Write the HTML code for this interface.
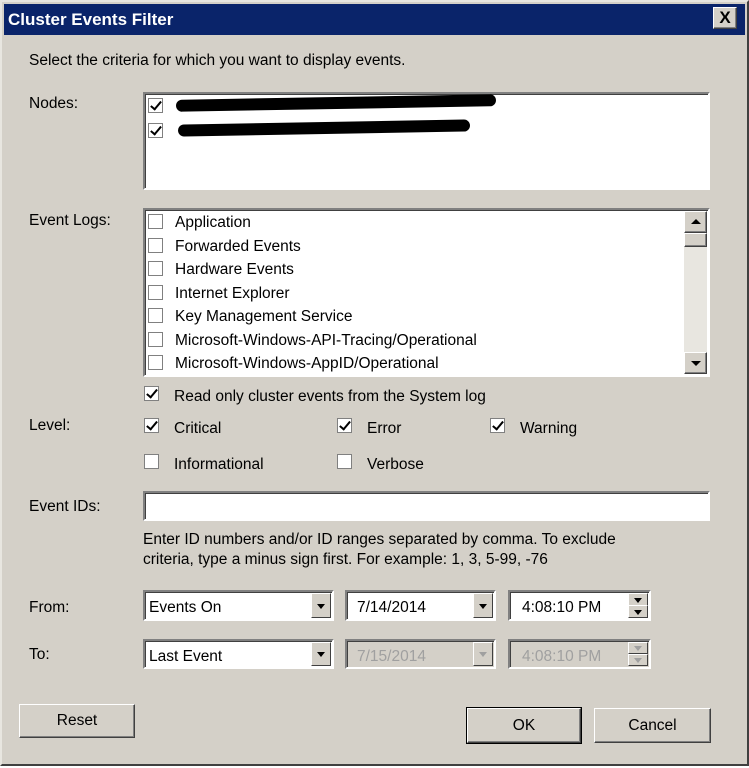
<!DOCTYPE html>
<html><head><meta charset="utf-8"><style>
body{margin:0;width:749px;height:768px;background:#fff;overflow:hidden;font-family:"Liberation Sans",sans-serif;font-size:15.5px;color:#000}
.win{position:absolute;left:0;top:0;width:745px;height:762px;background:#d4d0c8;border:2px solid;border-color:#e8e6e0 #404040 #404040 #e8e6e0}
.a{position:absolute;white-space:nowrap}
.t{margin-top:2px}
.title{position:absolute;left:2px;top:2px;width:741px;height:31px;background:#0a246a;color:#fff;font-weight:bold;font-size:17px;line-height:31px;padding-left:4px;box-sizing:border-box}
.sunk{position:absolute;background:#fff;border:2px solid;border-color:#808080 #fff #fff #808080;box-shadow:inset 1px 1px 0 #404040;box-sizing:border-box}
.cb{position:absolute;width:15px;height:15px;background:#fff;border:1px solid #808080;box-sizing:border-box}
.cb.k::after{content:"";position:absolute;left:4px;top:0px;width:4px;height:9px;border:solid #000;border-width:0 2px 2px 0;transform:rotate(40deg)}
.btn{position:absolute;background:#d4d0c8;border:1px solid;border-color:#fff #404040 #404040 #fff;box-shadow:inset -1px -1px 0 #808080;box-sizing:border-box;text-align:center}
.dd{position:absolute;width:20px;background:#d4d0c8;border:1px solid;border-color:#fff #404040 #404040 #fff;box-sizing:border-box}
.dd::after{content:"";position:absolute;left:5px;top:50%;margin-top:-2px;border:4px solid transparent;border-top:5px solid #000;border-bottom:0}
.dd.g::after{border-top-color:#a0a0a0}
.g{color:#a0a0a0}
</style></head><body>
<div class="win">
<div class="title">Cluster Events Filter</div>
<div class="btn" style="left:711px;top:5px;width:24px;height:22px;line-height:20px;font-size:17px;font-weight:bold">X</div>
</div>
<div class="a t" style="left:29px;top:50px">Select the criteria for which you want to display events.</div>
<div class="a t" style="left:29px;top:93px">Nodes:</div>
<div class="sunk" style="left:143px;top:92px;width:567px;height:98px"></div>
<div class="cb k" style="left:148px;top:98px"></div>
<div class="cb k" style="left:148px;top:123px"></div>
<div class="a" style="left:176px;top:97px;width:320px;height:12px;background:#000;border-radius:6px;transform:rotate(-1deg)"></div>
<div class="a" style="left:178px;top:122px;width:292px;height:12px;background:#000;border-radius:6px;transform:rotate(-1deg)"></div>
<div class="a t" style="left:29px;top:210px">Event Logs:</div>
<div class="sunk" style="left:143px;top:208px;width:567px;height:169px"></div>
<div class="a" style="left:684px;top:211px;width:23px;height:163px;background:#e8e6e0"></div>
<div class="btn" style="left:684px;top:211px;width:23px;height:22px"><div style="margin:7px auto 0;width:0;border:5px solid transparent;border-bottom:5px solid #000;border-top:0"></div></div>
<div class="btn" style="left:684px;top:233px;width:23px;height:14px"></div>
<div class="btn" style="left:684px;top:352px;width:23px;height:22px"><div style="margin:8px auto 0;width:0;border:5px solid transparent;border-top:5px solid #000;border-bottom:0"></div></div>
<div class="cb" style="left:148px;top:214px"></div><div class="a t" style="left:175px;top:212px">Application</div>
<div class="cb" style="left:148px;top:238px"></div><div class="a t" style="left:175px;top:236px">Forwarded Events</div>
<div class="cb" style="left:148px;top:261px"></div><div class="a t" style="left:175px;top:259px">Hardware Events</div>
<div class="cb" style="left:148px;top:285px"></div><div class="a t" style="left:175px;top:283px">Internet Explorer</div>
<div class="cb" style="left:148px;top:308px"></div><div class="a t" style="left:175px;top:306px">Key Management Service</div>
<div class="cb" style="left:148px;top:332px"></div><div class="a t" style="left:175px;top:330px">Microsoft-Windows-API-Tracing/Operational</div>
<div class="cb" style="left:148px;top:355px"></div><div class="a t" style="left:175px;top:353px">Microsoft-Windows-AppID/Operational</div>
<div class="cb k" style="left:144px;top:386px"></div><div class="a t" style="left:174px;top:386px">Read only cluster events from the System log</div>
<div class="a t" style="left:29px;top:415px">Level:</div>
<div class="cb k" style="left:144px;top:418px"></div><div class="a t" style="left:174px;top:418px">Critical</div>
<div class="cb k" style="left:337px;top:418px"></div><div class="a t" style="left:367px;top:418px">Error</div>
<div class="cb k" style="left:490px;top:418px"></div><div class="a t" style="left:520px;top:418px">Warning</div>
<div class="cb" style="left:144px;top:454px"></div><div class="a t" style="left:174px;top:454px">Informational</div>
<div class="cb" style="left:337px;top:454px"></div><div class="a t" style="left:367px;top:454px">Verbose</div>
<div class="a t" style="left:29px;top:496px">Event IDs:</div>
<div class="sunk" style="left:143px;top:491px;width:567px;height:30px"></div>
<div class="a t" style="left:143px;top:528px;line-height:20px">Enter ID numbers and/or ID ranges separated by comma. To exclude<br>criteria, type a minus sign first. For example: 1, 3, 5-99, -76</div>
<div class="a t" style="left:29px;top:597px">From:</div>
<div class="sunk" style="left:143px;top:590px;width:191px;height:31px"><div class="a t" style="left:4px;top:5px">Events On</div><div class="dd" style="right:1px;top:1px;height:25px"></div></div>
<div class="sunk" style="left:345px;top:590px;width:151px;height:31px"><div class="a t" style="left:10px;top:5px">7/14/2014</div><div class="dd" style="right:1px;top:1px;height:25px"></div></div>
<div class="sunk" style="left:508px;top:590px;width:143px;height:31px"><div class="a t" style="left:12px;top:5px">4:08:10 PM</div><div class="dd" style="right:1px;top:1px;height:13px"></div><div class="dd" style="right:1px;top:13px;height:13px"></div></div>
<div class="a t" style="left:29px;top:644px">To:</div>
<div class="sunk" style="left:143px;top:639px;width:191px;height:30px"><div class="a t" style="left:4px;top:5px">Last Event</div><div class="dd" style="right:1px;top:1px;height:24px"></div></div>
<div class="sunk" style="left:345px;top:639px;width:151px;height:30px;background:#d4d0c8"><div class="a t g" style="left:10px;top:5px">7/15/2014</div><div class="dd g" style="right:1px;top:1px;height:24px"></div></div>
<div class="sunk" style="left:508px;top:639px;width:143px;height:30px;background:#d4d0c8"><div class="a t g" style="left:12px;top:5px">4:08:10 PM</div><div class="dd g" style="right:1px;top:1px;height:12px"></div><div class="dd g" style="right:1px;top:13px;height:12px"></div></div>
<div class="btn" style="left:19px;top:704px;width:116px;height:34px;line-height:32px">Reset</div>
<div class="btn" style="left:467px;top:708px;width:114px;height:35px;line-height:33px;outline:1px solid #000">OK</div>
<div class="btn" style="left:594px;top:708px;width:117px;height:35px;line-height:33px">Cancel</div>
</body></html>
